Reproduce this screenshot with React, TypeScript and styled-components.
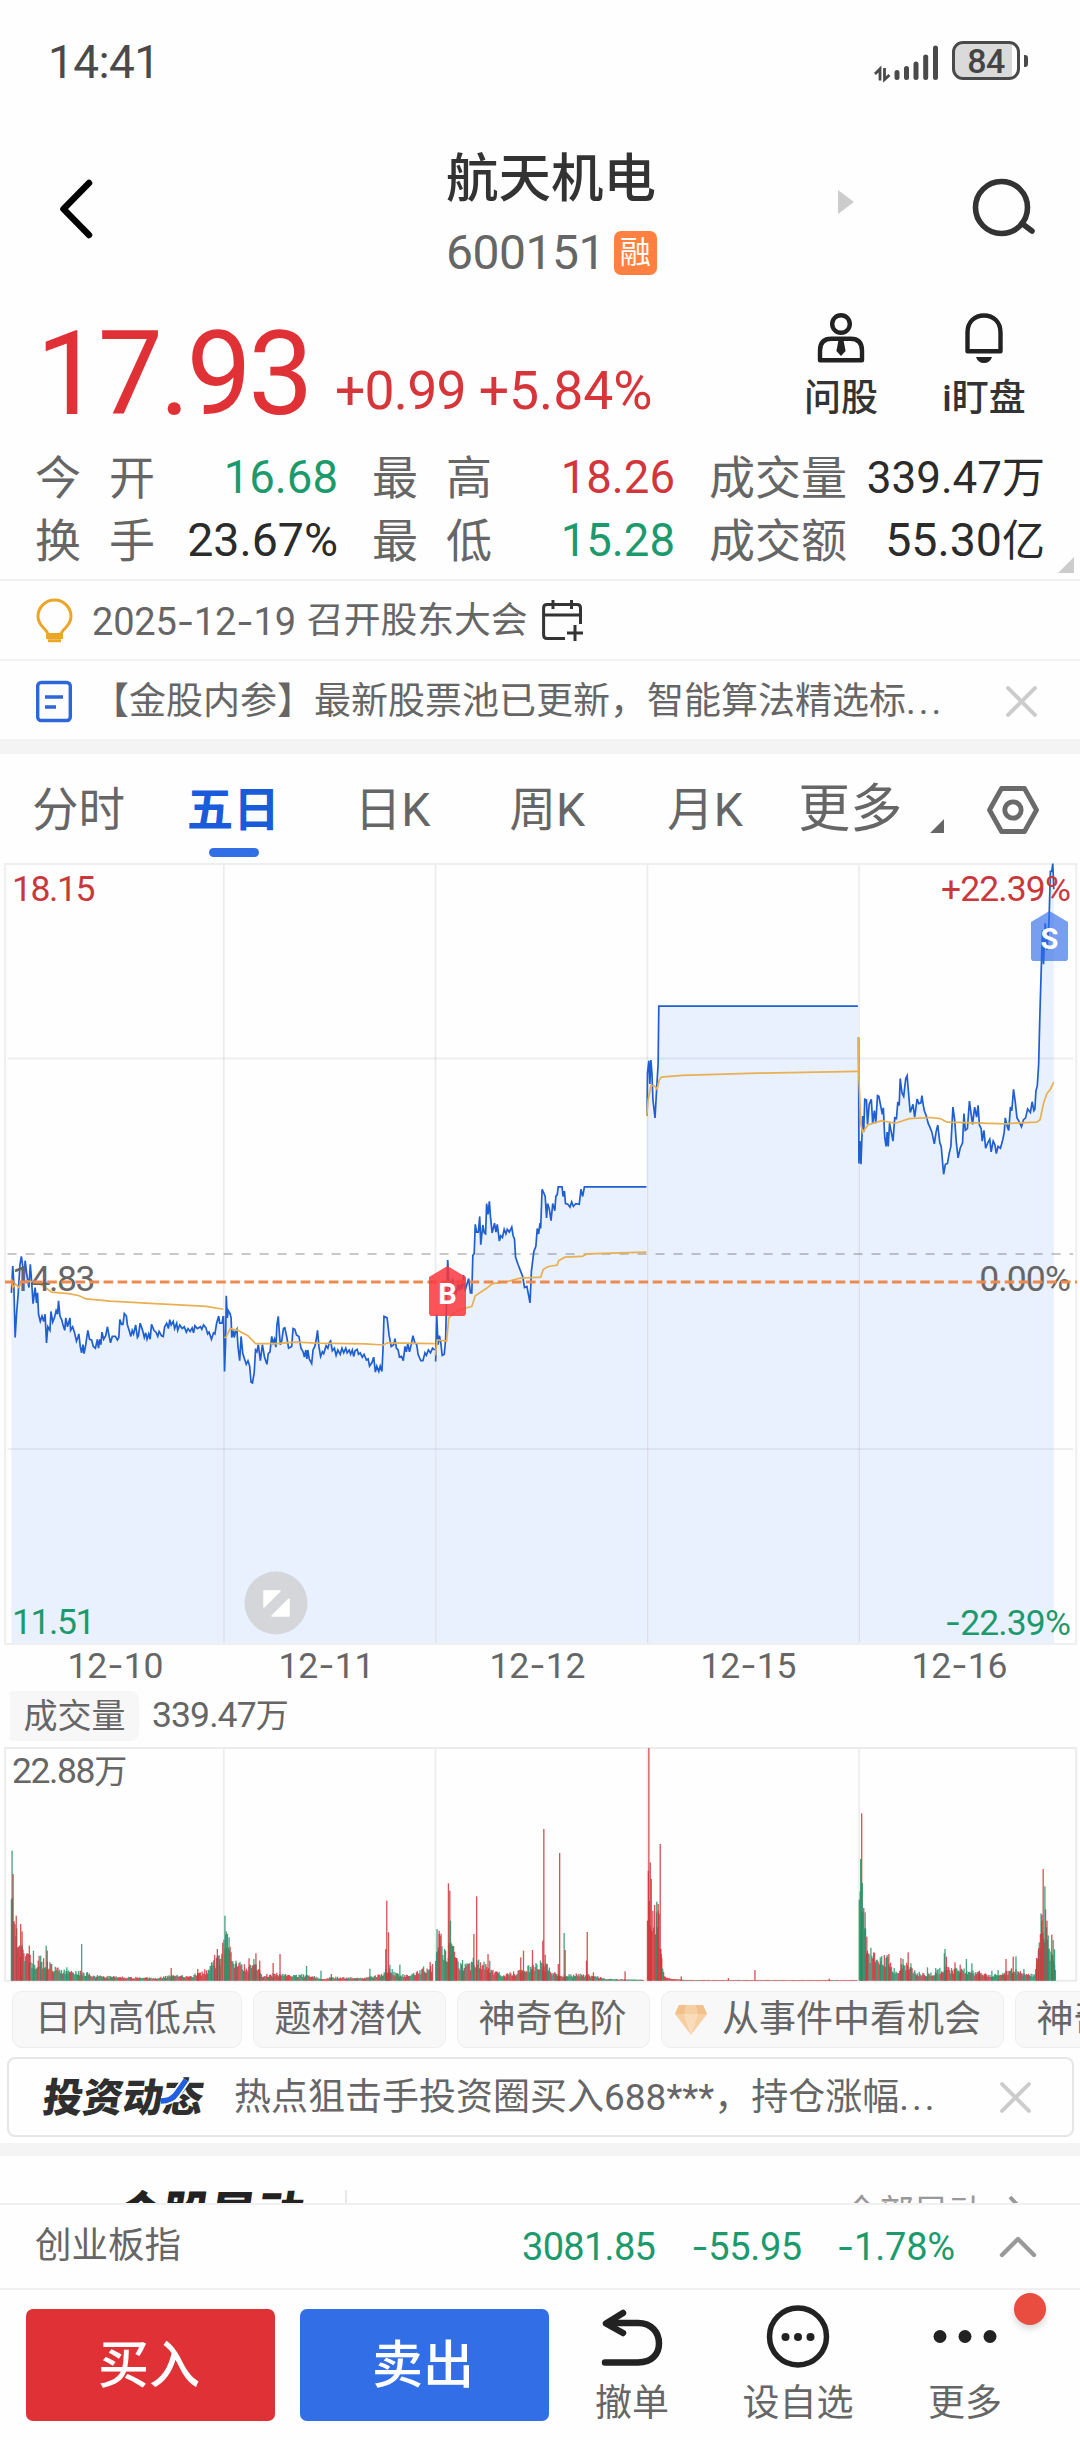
import React from "react";
import styled, { createGlobalStyle } from "styled-components";

const RED = "#e03236";
const GREEN = "#1d9a6c";
const GREY = "#666666";
const DARK = "#333333";
const BLUE = "#326ee6";

const Global = createGlobalStyle`
  * { box-sizing: border-box; }
  body { margin: 0; background: #fefefe; }
  svg { display: block; flex: none; overflow: visible; }
`;

const Page = styled.div`
  width: 1080px;
  height: 2440px;
  overflow: hidden;
  display: flex;
  flex-direction: column;
  background: #fefefe;
  font-family: Roboto, "Noto Sans CJK SC", sans-serif;
  line-height: 1;
  color: ${GREY};
`;

const Text = styled.span<{ $size: number; $color?: string; $weight?: number; $spacing?: number; $left?: number }>`
  display: block;
  flex: none;
  white-space: nowrap;
  line-height: 1;
  font-size: ${(p) => p.$size}px;
  color: ${(p) => p.$color ?? GREY};
  font-weight: ${(p) => p.$weight ?? 400};
  letter-spacing: ${(p) => p.$spacing ?? 0}px;
  margin-left: ${(p) => p.$left ?? 0}px;
`;

const Wan = styled.span<{ $size: number }>`
  font-size: ${(p) => p.$size}px;
  letter-spacing: 0;
`;

const Hyphen = styled.span`
  font-family: Inter, sans-serif;
`;

const Dots = styled.span`
  letter-spacing: 3px;
`;

/* Figures are set with a wider hyphen than the digit font carries. */
const Fig = ({ children }: { children: string }) => (
  <>
    {children.split(/(-)/).map((part, i) => (part === "-" ? <Hyphen key={i}>-</Hyphen> : part))}
  </>
);

/* ---------- status bar and header ---------- */

const StatusBar = styled.div`
  height: 124px;
  flex: none;
  display: flex;
  align-items: center;
  padding: 0 52px 0 48px;
`;

const Spacer = styled.div`
  flex: 1;
`;

const Battery = styled.div`
  width: 68px;
  height: 39px;
  margin-left: 13px;
  margin-top: -3px;
  border: 3.5px solid #4a4a4a;
  border-radius: 11px;
  background: linear-gradient(to right, #dadada 0 57px, #fff 57px);
  display: flex;
  align-items: center;
  justify-content: center;
`;

const BatteryTip = styled.div`
  width: 4px;
  height: 12px;
  margin-left: 4px;
  margin-top: -3px;
  border-radius: 0 3px 3px 0;
  background: #4a4a4a;
`;

const Header = styled.header`
  height: 172px;
  flex: none;
  display: flex;
  padding: 0 44px 0 60px;
`;

const TitleBlock = styled.div`
  width: 215px;
  margin-left: 352px;
  padding-top: 29px;
  display: flex;
  flex-direction: column;
`;

const CodeRow = styled.div`
  display: flex;
  align-items: center;
  height: 44px;
  margin-top: 25px;
`;

const MarginTag = styled.span`
  width: 43px;
  height: 44px;
  margin-left: 9px;
  border-radius: 7px;
  background: #ff8040;
  color: #fff;
  font-size: 31px;
  line-height: 44px;
  text-align: center;
`;

/* ---------- quote ---------- */

const PriceRow = styled.section`
  height: 143px;
  flex: none;
  display: flex;
  padding: 0 51px 0 36px;
`;

const PriceFigure = styled.div`
  width: 283px;
  padding-top: 20px;
`;

const Change = styled.div`
  display: flex;
  gap: 13px;
  margin-top: 68px;
`;

const QuickActions = styled.div`
  display: flex;
  gap: 60px;
`;

const QuickAction = styled.div<{ $width: number }>`
  width: ${(p) => p.$width}px;
  display: flex;
  flex-direction: column;
  align-items: center;
  gap: 17px;
  padding-top: 17px;
`;

const QuoteWrap = styled.div`
  position: relative;
  flex: none;
  height: 142px;
`;

const Quotes = styled.section`
  height: 142px;
  display: grid;
  grid-template-columns: 303px 303px 336px;
  column-gap: 34px;
  grid-template-rows: 63px 63px;
  padding: 7px 35px 0;
  border-bottom: 2px solid #f1f1f1;
`;

const Quote = styled.div`
  display: flex;
  align-items: center;
  justify-content: space-between;
`;

const Fold = styled.div<{ $color: string; $size: number }>`
  width: ${(p) => p.$size}px;
  height: ${(p) => p.$size}px;
  background: ${(p) => p.$color};
  clip-path: polygon(100% 0, 100% 100%, 0 100%);
`;

const QuoteFold = styled(Fold)`
  position: absolute;
  right: 6px;
  bottom: 8px;
`;

/* ---------- notices ---------- */

const Notice = styled.div`
  height: 80px;
  flex: none;
  display: flex;
  align-items: center;
  padding: 2px 43px 0 36px;
  border-bottom: 2px solid #f3f3f3;
`;

const CalendarSlot = styled.div`
  margin-left: 14px;
`;

const Band = styled.div`
  height: 13px;
  flex: none;
  background: #f4f4f4;
`;

/* ---------- tabs ---------- */

const Tabs = styled.nav`
  height: 108px;
  flex: none;
  display: flex;
  padding: 31px 41px 0 32px;
`;

const Tab = styled.div<{ $width: number; $size?: number; $active?: boolean }>`
  width: ${(p) => p.$width}px;
  height: 77px;
  line-height: 50px;
  white-space: nowrap;
  font-size: ${(p) => p.$size ?? 46.5}px;
  font-weight: ${(p) => (p.$active ? 700 : 400)};
  color: ${(p) => (p.$active ? "#1a5bdc" : GREY)};
  &::after {
    content: "";
    display: ${(p) => (p.$active ? "block" : "none")};
    width: 50px;
    height: 9px;
    margin: 13px 0 0 22px;
    border-radius: 5px;
    background: ${BLUE};
  }
`;

const TabFold = styled.div`
  width: 57px;
  padding-top: 34px;
`;

const TabIcon = styled.div`
  padding-top: 1px;
`;

/* ---------- charts ---------- */

const PricePanel = styled.section`
  position: relative;
  height: 784px;
  flex: none;
`;

const ChartLabel = styled.span<{ $top: number; $side: "left" | "right"; $color: string }>`
  position: absolute;
  top: ${(p) => p.$top}px;
  ${(p) => p.$side}: ${(p) => (p.$side === "left" ? 12 : 10)}px;
  font-size: 35.5px;
  line-height: 1;
  letter-spacing: ${(p) => (p.$side === "right" ? "-0.9px" : "-1.4px")};
  color: ${(p) => p.$color};
`;

const Flag = styled.span<{ $x: number; $y: number; $color: string }>`
  position: absolute;
  left: ${(p) => p.$x}px;
  top: ${(p) => p.$y}px;
  width: 37px;
  height: 50px;
  padding-top: 6px;
  background: ${(p) => p.$color};
  clip-path: polygon(50% 0, 100% 22%, 100% 96%, 96% 100%, 4% 100%, 0 96%, 0 22%);
  color: #fff;
  font: 700 29px/44px Roboto, sans-serif;
  text-align: center;
`;

const Expand = styled.div`
  position: absolute;
  left: 244px;
  top: 709px;
`;

const CostLine = styled.svg`
  position: absolute;
  left: 5px;
  top: 418px;
`;

const Dates = styled.div`
  height: 45px;
  flex: none;
  display: grid;
  grid-template-columns: repeat(5, 211px);
  padding: 0 0 4px 10px;
  justify-items: center;
  align-items: center;
`;

const VolumeHead = styled.div`
  height: 55px;
  flex: none;
  display: flex;
  align-items: center;
  padding: 0 0 5px 10px;
`;

const VolumeTag = styled.div`
  width: 129px;
  height: 50px;
  border-radius: 3px 8px 8px 3px;
  background: #f7f7f7;
  display: flex;
  align-items: center;
  justify-content: center;
`;

const VolumePanel = styled.section`
  position: relative;
  height: 236px;
  flex: none;
`;

/* ---------- chips, news ---------- */

const Chips = styled.div`
  height: 75px;
  flex: none;
  display: flex;
  align-items: center;
  gap: 11px;
  padding: 0 0 0 12px;
  overflow: hidden;
`;

const Chip = styled.div<{ $width: number }>`
  width: ${(p) => p.$width}px;
  height: 57px;
  flex: none;
  display: flex;
  align-items: center;
  justify-content: center;
  gap: 14px;
  padding-right: 2px;
  border: 1.5px solid #eeeeee;
  border-radius: 10px;
  background: #f8f8f8;
`;

const EventChip = styled(Chip)`
  justify-content: flex-start;
  padding-left: 12px;
`;

const News = styled.div`
  height: 80px;
  flex: none;
  margin: 0 6px 6px 7px;
  padding: 0 41px 0 34px;
  display: flex;
  align-items: center;
  border: 2px solid #e6e6e6;
  border-radius: 8px;
`;

const Logo = styled.div`
  position: relative;
  width: 160px;
  margin-top: 4px;
  white-space: nowrap;
  font-size: 40px;
  font-weight: 900;
  color: #2f2f2f;
  line-height: 1;
  transform: skewX(-8deg);
  svg {
    position: absolute;
    left: 114px;
    top: 0;
    transform: skewX(8deg);
  }
`;

const NextSection = styled.div`
  height: 47px;
  flex: none;
  overflow: hidden;
  display: flex;
  padding: 34px 57px 0 118px;
`;

const NextTitle = styled.div`
  width: 188px;
  white-space: nowrap;
  font-size: 47px;
  line-height: 1;
  font-weight: 900;
  color: #222;
  transform: skewX(-8deg);
`;

const NextDivider = styled.div`
  width: 1.5px;
  margin-left: 39px;
  height: 30px;
  background: #e8e8e8;
`;

const NextLink = styled.div`
  display: flex;
  align-items: flex-start;
  gap: 25px;
  padding-top: 6px;
`;

/* ---------- bottom ---------- */

const IndexRow = styled.div`
  height: 87px;
  flex: none;
  display: flex;
  align-items: center;
  padding: 0 43px 0 35px;
  border-top: 2px solid #f0f0f0;
  border-bottom: 2px solid #f0f0f0;
`;

const ChevronSlot = styled.div`
  margin-left: 44px;
`;

const ActionBar = styled.footer`
  flex: 1;
  display: flex;
  padding: 19px 0 0 26px;
`;

const TradeButton = styled.button<{ $color: string }>`
  width: 249px;
  height: 112px;
  margin-right: 25px;
  padding: 1px 3px 0 0;
  border: 0;
  border-radius: 7px;
  background: ${(p) => p.$color};
  color: #fff;
  font: 500 51px/1 Roboto, "Noto Sans CJK SC", sans-serif;
`;

const Action = styled.div<{ $left: number }>`
  position: relative;
  width: 120px;
  margin-left: ${(p) => p.$left}px;
  display: flex;
  flex-direction: column;
  align-items: center;
  gap: 14px;
`;

const RedDot = styled.div`
  position: absolute;
  left: 109px;
  top: -16px;
  width: 32px;
  height: 32px;
  border-radius: 50%;
  background: #e84d40;
  box-shadow: 0 4px 6px rgba(0, 0, 0, 0.15);
`;

/* ---------- chart data (chart units) ---------- */

const PRICE = [
  "33,1240 37,1165 40,1210 44,1365 48,1300 53,1240 58,1160 62,1138 66,1165 70,1210 73,1150 78,1190 84,1225 88,1160 92,1210 96,1270 102,1225 106,1268 109,1240 112,1300 117,1320 122,1305 127,1320 131,1300 135,1380 139,1335 145,1345 148,1292 153,1322 158,1310 163,1290 167,1300 170,1262 174,1305 179,1315 183,1330 188,1345 191,1310 196,1335 203,1310 205,1345 211,1335 216,1350 222,1375 226,1365 229,1355 233,1390 237,1408 241,1385 244,1410 249,1385 255,1345 260,1370 266,1372 271,1390 277,1395 283,1370 286,1395 290,1370 293,1385 296,1350 301,1370 307,1360 312,1335 317,1362 321,1380 326,1362 335,1362 341,1372 345,1365 348,1315 353,1328 357,1328 361,1298 367,1305 370,1330 375,1345 380,1362 384,1345 388,1355 394,1330 399,1365 402,1360 407,1325 414,1345 419,1365 423,1352 427,1370 432,1355 436,1370 440,1328 447,1345 453,1350 458,1362 462,1348 469,1360 474,1362 478,1335 484,1325 489,1340 493,1315 497,1330 503,1320 507,1340 513,1325 516,1345 522,1330 529,1340 535,1335 541,1350 546,1340 552,1348 558,1338 562,1352 566,1332 573,1340 582,1335 586,1342 591,1330 598,1338 603,1355 607,1350 614,1370 620,1352 624,1355 629,1325 635,1305 638,1325 645,1325 648,1305",
  "649,1305 652,1460 655,1380 657,1248 660,1310 663,1290 668,1298 671,1310 673,1365 678,1345 680,1365 684,1350 688,1342 691,1390 696,1430 700,1362 705,1410 710,1425 715,1440 720,1430 725,1445 729,1490 733,1492 738,1465 742,1400 746,1405 750,1385 756,1430 762,1385 768,1420 775,1440 779,1410 784,1405 789,1362 793,1380 797,1370 801,1392 804,1330 808,1306 811,1350 814,1385 818,1375 823,1340 827,1338 833,1365 838,1395 847,1390 851,1340 856,1342 861,1358 868,1362 874,1395 880,1405 884,1420 888,1400 891,1425 894,1400 898,1425 905,1438 909,1400 914,1390 918,1372 922,1345 926,1390 931,1418 936,1405 940,1410 947,1388 952,1395 956,1380 960,1375 965,1402 971,1395 976,1415 981,1400 988,1412 993,1395 998,1408 1004,1395 1008,1408 1014,1400 1018,1412 1023,1400 1027,1418 1031,1402 1037,1398 1041,1412 1046,1408 1052,1420 1057,1412 1064,1428 1069,1425 1073,1445 1080,1435 1085,1420 1090,1462 1094,1445 1100,1460 1104,1445 1109,1460 1112,1400 1115,1306 1124,1310 1130,1360 1136,1390 1143,1385 1147,1368 1151,1395 1156,1400 1160,1420 1166,1418 1171,1430 1176,1390 1180,1405 1184,1382 1189,1405 1194,1385 1199,1360 1204,1378 1210,1385 1214,1412 1222,1430 1228,1430 1234,1408 1238,1415 1244,1400 1250,1408 1256,1395 1262,1400",
  "1265,1432 1268,1300 1272,1385 1276,1360 1280,1380 1284,1415 1290,1412 1294,1370 1297,1240 1300,1148 1304,1215 1309,1250 1314,1200 1318,1230 1324,1242 1330,1215 1334,1235 1338,1215 1342,1230 1346,1190 1350,1235 1356,1215 1361,1200 1366,1240 1370,1240 1373,1135 1377,1130 1380,1048 1384,1070 1389,1070 1393,1026 1396,1105 1402,1050 1406,1072 1410,1075 1413,990 1417,1020 1421,984 1424,1025 1429,1072 1436,1045 1440,1070 1444,1048 1450,1095 1454,1080 1459,1085 1464,1062 1469,1075 1473,1062 1479,1070 1486,1056 1490,1080 1494,1090 1497,1140 1504,1160 1512,1180 1518,1195 1523,1225 1530,1222 1539,1268 1543,1180 1550,1125 1556,1110 1560,1060 1564,1075 1568,1045 1570,1060 1574,950 1579,960 1583,970 1587,1030 1590,990 1595,1005 1600,1038 1605,990 1611,1010 1614,970 1618,965 1621,943 1632,943 1635,970 1639,955 1642,990 1649,992 1655,1000 1660,985 1665,998 1672,990 1682,992 1687,950 1692,970 1697,943 1877,943",
  "1879,745 1880,625 1884,590 1887,655 1890,588 1893,625 1896,700 1902,750 1906,680 1911,600 1913,437 2491,437",
  "2493,525 2494,878 2497,815 2500,880 2505,745 2508,790 2511,698 2516,700 2519,768 2524,712 2530,698 2534,765 2539,730 2543,765 2548,688 2552,690 2557,715 2562,740 2565,722 2569,805 2573,830 2576,790 2579,830 2583,765 2588,790 2593,815 2598,750 2603,752 2607,705 2611,715 2614,640 2619,680 2624,690 2630,640 2634,632 2639,690 2643,735 2651,712 2656,748 2663,697 2668,710 2674,708 2677,688 2681,715 2684,730 2690,745 2695,765 2701,778 2706,790 2713,823 2718,790 2723,770 2729,820 2733,830 2740,908 2745,880 2751,878 2756,850 2761,830 2767,720 2772,755 2777,820 2782,862 2788,835 2795,820 2799,738 2803,785 2809,780 2815,703 2820,740 2824,768 2830,720 2836,748 2840,715 2844,770 2849,780 2852,815 2857,785 2862,835 2868,820 2874,810 2878,845 2884,815 2889,825 2893,850 2898,830 2905,835 2912,810 2916,790 2919,750 2925,775 2929,785 2934,720 2938,730 2943,670 2948,705 2953,750 2959,760 2966,775 2972,755 2978,750 2984,725 2992,735 2997,705 3002,730 3005,725 3008,675 3012,660 3016,600 3019,480 3022,380 3027,225 3030,320 3035,205 3040,280 3046,200 3050,60 3054,60 3057,38 3060,110",
];

const AVERAGE = [
  "33,1200 37,1225 45,1215 55,1225 65,1205 100,1210 125,1220 150,1238 200,1242 230,1248 250,1257 320,1263 450,1270 560,1276 600,1278 648,1286",
  "651,1365 656,1365 668,1340 690,1345 720,1360 742,1382 800,1382 860,1378 920,1381 1060,1383 1113,1386 1125,1380 1262,1382",
  "1264,1415 1270,1372 1297,1375 1303,1310 1320,1295 1345,1285 1370,1278 1380,1248 1412,1228 1430,1214 1470,1209 1510,1199 1570,1196 1577,1175 1590,1167 1618,1162 1622,1150 1640,1140 1690,1138 1705,1131 1780,1129 1877,1126",
  "1878,745 1882,700 1890,660 1900,660 1908,670 1914,645 1920,636 1980,631 2200,625 2491,620",
  "2492,525 2494,640 2500,770 2505,790 2520,770 2560,758 2600,765 2640,752 2700,749 2730,752 2750,762 2830,764 2920,767 2960,764 3010,762 3020,755 3030,710 3040,682 3050,670 3060,650",
];

const ENVELOPE = [
  "33:225 45:150 50:90 65:75 80:55 100:45 120:50 140:40 160:28 200:22 230:20 250:18 270:12 300:10 450:6 500:12 560:12 600:25 640:60 648:90",
  "650:95 660:130 672:60 690:40 720:30 740:40 760:12 800:15 850:14 900:12 940:4 960:8 1060:6 1110:15 1130:30 1150:15 1180:12 1220:25 1258:35",
  "1265:60 1275:120 1290:60 1310:90 1330:40 1360:35 1375:50 1400:40 1430:25 1460:12 1500:20 1540:35 1568:40 1590:35 1600:20 1630:12 1690:15 1720:12 1760:4 1870:2",
  "1880:230 1890:180 1902:150 1912:150 1920:60 1930:10 1950:4 2000:1.5 2490:1.5",
  "2495:220 2510:130 2520:70 2540:60 2580:50 2600:20 2630:40 2660:18 2700:15 2740:30 2760:25 2800:25 2840:18 2880:12 2940:25 2980:14 3005:14 3015:90 3030:170 3045:90 3055:60 3065:20",
];

const SPIKES =
  "35:390g 38:320r 47:195r 60:170r 64:148r 85:105r 97:90g 118:75g 134:105g 137:90r 194:40g 237:110g 497:38r 574:35r 614:53g 623:77r 631:95r 638:65r 653:195g 657:148g 665:130g 685:60g 723:67r 737:65g 743:82r 754:60r 793:53r 813:80r 890:44g 932:30g 962:20r 1074:36g 1120:95r 1123:240r 1128:145r 1132:48g 1161:48g 1249:56r 1269:155g 1275:150r 1302:292r 1306:270r 1308:180g 1312:103g 1325:68r 1343:62g 1376:140r 1384:253r 1417:80r 1422:60g 1512:70r 1520:90r 1546:92r 1576:120r 1579:455r 1583:78r 1589:50g 1621:50r 1625:383r 1638:143g 1641:92r 1703:60r 1705:146r 1723:25r 1815:28r 1884:698r 1888:355r 1891:305r 1907:237g 1911:230r 1917:410r 1920:80r 1978:13r 2115:8r 2192:32r 2408:6r 2499:365g 2502:502r 2504:293g 2512:205g 2517:132r 2556:70g 2574:70g 2581:80r 2616:68r 2622:65g 2637:85r 2645:52g 2693:40g 2717:38g 2742:82g 2744:95g 2748:72r 2773:55r 2788:48r 2806:65g 2822:52g 2844:30r 2880:30g 2898:32g 2921:65r 2942:72r 2950:73g 2973:35g 3010:68r 3016:98r 3021:140r 3025:180r 3029:335r 3034:283g 3040:180r 3045:93g 3054:138r 3058:122g 3062:94g";

type Bar = { x: number; h: number; up: boolean };

const noise = (n: number) => {
  const v = Math.sin(n * 12.9898) * 43758.5453;
  return v - Math.floor(v);
};

const baseBars: Bar[] = ENVELOPE.flatMap((row, day) => {
  const pts = row.split(" ").map((s) => s.split(":").map(Number));
  const bars: Bar[] = [];
  let k = 0;
  for (let x = pts[0][0]; x <= pts[pts.length - 1][0]; x += 2.6) {
    while (k < pts.length - 2 && x > pts[k + 1][0]) k++;
    const [x0, h0] = pts[k];
    const [x1, h1] = pts[k + 1];
    const h = h0 + ((h1 - h0) * (x - x0)) / (x1 - x0);
    bars.push({ x, h: Math.max(1.5, h * (0.75 + 0.8 * noise(x))), up: noise(x * 3.1) > (day === 3 ? 0.1 : 0.5) });
  }
  return bars;
});

const spikeBars: Bar[] = SPIKES.split(" ").map((s) => {
  const [x, v] = s.split(":");
  return { x: Number(x), h: parseFloat(v), up: v.endsWith("r") };
});

const DAY_LINES = [650, 1264.5, 1880, 2494.5];

const PriceChart = () => (
  <svg width="1080" height="784" viewBox="0 33.6 3136 2195.2" preserveAspectRatio="none">
    {PRICE.map((p, i) => {
      const first = p.split(",")[0];
      const last = p.split(" ").slice(-1)[0].split(",")[0];
      return <polygon key={i} points={`${first},2222 ${p} ${last},2222`} fill="#e9f0fe" />;
    })}
    <g stroke="rgba(60,70,90,0.1)" strokeWidth="1.6" fill="none">
      {DAY_LINES.map((x) => (
        <path key={x} d={`M${x} 38V2222`} vectorEffect="non-scaling-stroke" />
      ))}
      <path d="M22 584H3116M22 1677H3116" stroke="rgba(60,70,90,0.08)" strokeWidth="2" vectorEffect="non-scaling-stroke" />
    </g>
    <rect x="15" y="39" width="3110" height="2184" fill="none" stroke="#efefef" strokeWidth="2" vectorEffect="non-scaling-stroke" />
    <path d="M22 1131H3116" stroke="rgba(60,60,60,0.28)" strokeWidth="2" strokeDasharray="9 9" vectorEffect="non-scaling-stroke" />
    {PRICE.map((p, i) => (
      <polyline key={i} points={p} fill="none" stroke="#1f5fd0" strokeWidth="1.7" vectorEffect="non-scaling-stroke" />
    ))}
    {AVERAGE.map((p, i) => (
      <polyline key={i} points={p} fill="none" stroke="#e8b050" strokeWidth="1.7" vectorEffect="non-scaling-stroke" />
    ))}
  </svg>
);

const VolumeChart = () => (
  <svg width="1080" height="236" viewBox="0 18 3136 708" preserveAspectRatio="none">
    <g fill="none" stroke="#ececec" strokeWidth="1.6">
      {DAY_LINES.map((x) => (
        <path key={x} d={`M${x} 24V722`} vectorEffect="non-scaling-stroke" />
      ))}
      <rect x="15" y="24" width="3110" height="698" strokeWidth="2" vectorEffect="non-scaling-stroke" />
    </g>
    {[...baseBars, ...spikeBars].map((b, i) => (
      <rect key={i} x={b.x - 1.8} y={722 - b.h} width="3.8" height={b.h} fill={b.up ? "#cf3439" : "#27906a"} opacity="0.85" />
    ))}
  </svg>
);

/* ---------- icons ---------- */

const Signal = () => (
  <svg width="65" height="38" viewBox="874 41 65 38">
    <g stroke="#4a4a4a" strokeWidth="5" strokeLinecap="round">
      <path d="M897 70.500V75.500M906.500 66.500V75.500M916 62V75.500M925.700 55V75.500M935.500 46V75.500" />
    </g>
    <path d="M875 72L880 67V78.500M884.500 66V77.500L889.500 73" fill="none" stroke="#4a4a4a" strokeWidth="2.800" />
  </svg>
);

const Cross = () => (
  <svg width="31" height="31" viewBox="0 0 30 30" fill="none" stroke="#cccccc" strokeWidth="3.800" strokeLinecap="round">
    <path d="M2 2L28 28M28 2L2 28" />
  </svg>
);

const Person = () => (
  <svg width="48" height="50" viewBox="0 0 48 50" fill="none" stroke="#222" strokeWidth="4.400">
    <circle cx="24" cy="11" r="8.800" />
    <path d="M3 47.300V37.500Q3 25.800 14.500 25.800H33.500Q45 25.800 45 37.500V47.300Z" strokeLinejoin="round" />
    <path d="M21.500 27H26.500L28.600 38L24 43L19.400 38Z" fill="#222" stroke="none" />
  </svg>
);

const Bell = () => (
  <svg width="48" height="50" viewBox="0 0 48 50" fill="none" stroke="#222" strokeWidth="4.400">
    <path d="M7.500 38.300V19.500C7.500 9 14.500 2.500 24 2.500S40.500 9 40.500 19.500V38.300Z" strokeLinejoin="round" />
    <path d="M16 44H32C30.500 48 28 50 24 50S17.500 48 16 44Z" fill="#222" stroke="none" />
  </svg>
);

const Bulb = () => (
  <svg width="37" height="44" viewBox="0 0 37 44" fill="none" stroke="#eaa628" strokeWidth="3">
    <path d="M12 35.500C11.500 30 2 27.500 2 17.500A16.500 16.500 0 0 1 35 17.500C35 27.500 25.500 30 25 35.500Z" strokeLinejoin="round" />
    <path d="M11.500 36.500H25.500V38.500H11.500ZM12 41.800H25" />
  </svg>
);

const CalendarAdd = () => (
  <svg width="42" height="42" viewBox="0 0 42 42" fill="none" stroke="#333" strokeWidth="3">
    <path d="M38.500 24V8Q38.500 4.500 35 4.500H5Q1.600 4.500 1.600 8V35Q1.600 38.500 5 38.500H23M2 15H38.500M11 0V9M29.500 0V9M33 25V41M25 33H41" />
  </svg>
);

const Doc = () => (
  <svg width="36" height="41" viewBox="0 0 36 41" fill="none" stroke="#2d66d8" strokeWidth="3.400">
    <rect x="1.700" y="1.500" width="32.600" height="38" rx="3.500" />
    <path d="M9 16H27M9 26H20" />
  </svg>
);

const Gear = () => (
  <svg width="52" height="48" viewBox="0 0 52 48" fill="none" stroke="#6a6a6a" strokeWidth="4.800">
    <path d="M14.500 2.500H37.500L49.500 24L37.500 45.500H14.500L2.500 24Z" strokeLinejoin="round" />
    <circle cx="26" cy="24" r="8.200" />
  </svg>
);

const Diamond = () => (
  <svg width="34" height="32" viewBox="0 0 34 32">
    <path d="M5 1H29L33 10L17 31L1 10Z" fill="#f6d0a4" />
    <path d="M5 1H29L33 10H1Z" fill="#f2c18b" />
    <path d="M10 10H24L17 31Z" fill="#fbe2c4" />
    <path d="M12 1L10 10L17 31L24 10L22 1Z" fill="#f8d8b2" opacity="0.600" />
  </svg>
);

const QUOTES: { label: string; wide?: boolean; value: string; size: number; unit?: string; color: string }[] = [
  { label: "今开", wide: true, value: "16.68", size: 45.5, color: GREEN },
  { label: "最高", wide: true, value: "18.26", size: 45.5, color: "#d2363a" },
  { label: "成交量", value: "339.47", size: 44, unit: "万", color: "#2b2b2b" },
  { label: "换手", wide: true, value: "23.67%", size: 46.5, color: "#2b2b2b" },
  { label: "最低", wide: true, value: "15.28", size: 45.5, color: GREEN },
  { label: "成交额", value: "55.30", size: 46.5, unit: "亿", color: "#2b2b2b" },
];

export default function App() {
  return (
    <Page>
      <Global />
      <StatusBar>
        <Text $size={46} $color="#4a4a4a" $spacing={-0.6}>14:41</Text>
        <Spacer />
        <Signal />
        <Battery>
          <Text $size={34} $weight={500} $color="#444" $spacing={-0.5}>84</Text>
        </Battery>
        <BatteryTip />
      </StatusBar>

      <Header>
        <svg width="34" height="172" viewBox="60 124 34 172" fill="none" stroke="#000" strokeWidth="6.500" strokeLinecap="round" strokeLinejoin="round">
          <path d="M89 183L63.500 209L89 235" />
        </svg>
        <TitleBlock>
          <Text $size={52.5} $weight={500} $color={DARK}>航天机电</Text>
          <CodeRow>
            <Text $size={48} $spacing={-0.5}>600151</Text>
            <MarginTag>融</MarginTag>
          </CodeRow>
        </TitleBlock>
        <Spacer />
        <svg width="200" height="172" viewBox="836 124 200 172" fill="none">
          <path d="M838 190L854 202L838 214Z" fill="#ccc" />
          <circle cx="1001.500" cy="207.500" r="26" stroke="#333" strokeWidth="5.600" />
          <path d="M1022 223.500L1032 231" stroke="#333" strokeWidth="5.600" strokeLinecap="round" />
        </svg>
      </Header>

      <PriceRow>
        <PriceFigure>
          <Text $size={116} $color={RED} $spacing={-3.5}>17.93</Text>
        </PriceFigure>
        <Change>
          <Text $size={53.5} $color="#d6363a" $left={16} $spacing={-0.8}>+0.99</Text>
          <Text $size={53.5} $color="#d6363a">+5.84%</Text>
        </Change>
        <Spacer />
        <QuickActions>
          <QuickAction $width={76}>
            <Person />
            <Text $size={37} $weight={500} $color={DARK}>问股</Text>
          </QuickAction>
          <QuickAction $width={90}>
            <Bell />
            <Text $size={37} $weight={500} $color={DARK}>i盯盘</Text>
          </QuickAction>
        </QuickActions>
      </PriceRow>

      <QuoteWrap>
        <Quotes>
          {QUOTES.map((q) => (
            <Quote key={q.label}>
              <Text $size={46} $spacing={q.wide ? 28 : 0}>{q.label}</Text>
              <Text $size={q.size} $color={q.color}>
                {q.value}
                {q.unit && <Wan $size={43}>{q.unit}</Wan>}
              </Text>
            </Quote>
          ))}
        </Quotes>
        <QuoteFold $color="#cccccc" $size={16} />
      </QuoteWrap>

      <Notice>
        <Bulb />
        <Text $size={38} $left={19} $spacing={-0.2}><Fig>2025-12-19</Fig></Text>
        <Text $size={36.8} $left={11}>召开股东大会</Text>
        <CalendarSlot><CalendarAdd /></CalendarSlot>
      </Notice>
      <Notice>
        <Doc />
        <Text $size={37} $left={20}>【金股内参】最新股票池已更新，智能算法精选标<Dots>...</Dots></Text>
        <Spacer />
        <Cross />
      </Notice>
      <Band />

      <Tabs>
        <Tab $width={155}>分时</Tab>
        <Tab $width={168} $active>五日</Tab>
        <Tab $width={155}>日K</Tab>
        <Tab $width={158}>周K</Tab>
        <Tab $width={131}>月K</Tab>
        <Tab $width={132} $size={52}>更多</Tab>
        <TabFold><Fold $color="#666" $size={14} /></TabFold>
        <TabIcon><Gear /></TabIcon>
      </Tabs>

      <PricePanel>
        <PriceChart />
        <ChartLabel $top={10} $side="left" $color="#c9393c">18.15</ChartLabel>
        <ChartLabel $top={10} $side="right" $color="#c9393c">+22.39%</ChartLabel>
        <ChartLabel $top={400} $side="left" $color={GREY}>14.83</ChartLabel>
        <ChartLabel $top={400} $side="right" $color={GREY}>0.00%</ChartLabel>
        <ChartLabel $top={743} $side="left" $color={GREEN}>11.51</ChartLabel>
        <ChartLabel $top={743} $side="right" $color={GREEN}><Fig>-22.39%</Fig></ChartLabel>
        <CostLine width="1072" height="4">
          <path d="M0 2H1072" stroke="#ee8a50" strokeWidth="3.200" strokeDasharray="9.600 4.480" />
        </CostLine>
        <Flag $x={429} $y={404} $color="rgba(250,55,62,0.85)">B</Flag>
        <Flag $x={1031} $y={49} $color="rgba(50,110,230,0.66)">S</Flag>
        <Expand>
          <svg width="64" height="64" viewBox="0 0 64 64">
            <circle cx="32" cy="32" r="31.500" fill="#d5d6d9" />
            <path d="M20 20H36L20 36ZM45 28V45H28Z" fill="#fff" stroke="#fff" strokeWidth="1.500" strokeLinejoin="round" />
          </svg>
        </Expand>
      </PricePanel>

      <Dates>
        {["12-10", "12-11", "12-12", "12-15", "12-16"].map((d) => (
          <Text key={d} $size={35.5}><Fig>{d}</Fig></Text>
        ))}
      </Dates>

      <VolumeHead>
        <VolumeTag><Text $size={34}>成交量</Text></VolumeTag>
        <Text $size={35.5} $left={13} $spacing={-0.9}>339.47<Wan $size={33}>万</Wan></Text>
      </VolumeHead>

      <VolumePanel>
        <VolumeChart />
        <ChartLabel $top={8} $side="left" $color={GREY}>22.88<Wan $size={33}>万</Wan></ChartLabel>
      </VolumePanel>

      <Chips>
        <Chip $width={230}><Text $size={36.5}>日内高低点</Text></Chip>
        <Chip $width={193}><Text $size={37}>题材潜伏</Text></Chip>
        <Chip $width={193}><Text $size={37}>神奇色阶</Text></Chip>
        <EventChip $width={343}><Diamond /><Text $size={37}>从事件中看机会</Text></EventChip>
        <Chip $width={193}><Text $size={37}>神奇电波</Text></Chip>
      </Chips>

      <News>
        <Logo>
          投资动态
          <svg width="34" height="26" viewBox="0 0 34 26" fill="none" stroke="#fff" strokeWidth="9">
            <path d="M3 22Q14 22 19 14L28 1" />
            <path d="M3 22Q14 22 19 14L28 1" stroke="#1f5fe0" strokeWidth="5.500" />
          </svg>
        </Logo>
        <Text $size={37} $left={31}>热点狙击手投资圈买入688***，持仓涨幅<Dots>...</Dots></Text>
        <Spacer />
        <Cross />
      </News>
      <Band />

      <NextSection>
        <NextTitle>个股异动</NextTitle>
        <NextDivider />
        <Spacer />
        <NextLink>
          <Text $size={35} $color="#999">全部异动</Text>
          <svg width="14" height="28" viewBox="0 0 14 28" fill="none" stroke="#999" strokeWidth="4">
            <path d="M1 1L13 14L1 27" />
          </svg>
        </NextLink>
      </NextSection>

      <IndexRow>
        <Text $size={36.5}>创业板指</Text>
        <Spacer />
        <Text $size={38} $color={GREEN} $spacing={-0.7}>3081.85</Text>
        <Text $size={38} $color={GREEN} $left={36} $spacing={-0.4}><Fig>-55.95</Fig></Text>
        <Text $size={38} $color={GREEN} $left={35} $spacing={-0.2}><Fig>-1.78%</Fig></Text>
        <ChevronSlot>
          <svg width="38" height="22" viewBox="0 0 38 22" fill="none" stroke="#999" strokeWidth="4.400" strokeLinecap="round" strokeLinejoin="round">
            <path d="M3 19L19 3L35 19" />
          </svg>
        </ChevronSlot>
      </IndexRow>

      <ActionBar>
        <TradeButton $color={RED}>买入</TradeButton>
        <TradeButton $color={BLUE}>卖出</TradeButton>
        <Action $left={-2}>
          <svg width="64" height="62" viewBox="0 0 64 62" fill="none" stroke="#222" strokeWidth="6.500" strokeLinecap="round" strokeLinejoin="round">
            <path d="M23 4L6 14.500L23 24" fill="none" />
            <path d="M8 14H38C52 14 59 24 59 34.500S52 53.500 38 53.500H5" />
          </svg>
          <Text $size={37}>撤单</Text>
        </Action>
        <Action $left={46}>
          <svg width="64" height="62" viewBox="0 0 64 62">
            <circle cx="32" cy="27.500" r="28.500" fill="none" stroke="#222" strokeWidth="5.500" />
            <g fill="#222">
              <circle cx="19.500" cy="28" r="4" />
              <circle cx="32" cy="28" r="4" />
              <circle cx="44.500" cy="28" r="4" />
            </g>
          </svg>
          <Text $size={37}>设自选</Text>
        </Action>
        <Action $left={47}>
          <svg width="64" height="62" viewBox="0 0 64 62" fill="#222">
            <circle cx="7" cy="27.500" r="6.500" />
            <circle cx="32" cy="27.500" r="6.500" />
            <circle cx="57" cy="27.500" r="6.500" />
          </svg>
          <Text $size={37}>更多</Text>
          <RedDot />
        </Action>
      </ActionBar>
    </Page>
  );
}
